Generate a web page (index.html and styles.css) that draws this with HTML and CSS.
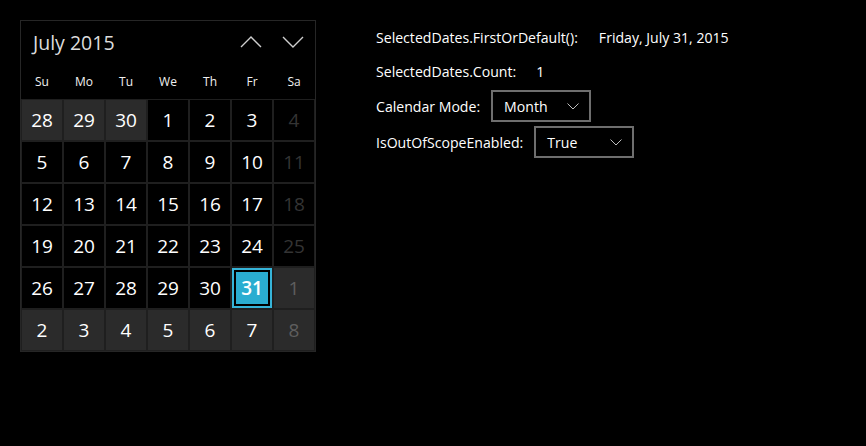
FILE: index.html
```html
<!DOCTYPE html>
<html>
<head>
<meta charset="utf-8">
<link rel="stylesheet" href="styles.css">
</head>
<body>
<div class="page">
  <div class="calendar">
    <div class="cal-head">
      <div class="month-title">July 2015</div>
      <div class="nav">
        <svg class="chev" width="22" height="12" viewBox="0 0 22 12"><polyline points="1,11 11,1 21,11" fill="none" stroke="#cfcfcf" stroke-width="1.4"/></svg>
        <svg class="chev" width="22" height="12" viewBox="0 0 22 12"><polyline points="1,1 11,11 21,1" fill="none" stroke="#cfcfcf" stroke-width="1.4"/></svg>
      </div>
    </div>
    <div class="weekdays">
      <span>Su</span><span>Mo</span><span>Tu</span><span>We</span><span>Th</span><span>Fr</span><span>Sa</span>
    </div>
    <div class="grid">
      <div class="cell out">28</div><div class="cell out">29</div><div class="cell out">30</div><div class="cell">1</div><div class="cell">2</div><div class="cell">3</div><div class="cell dim">4</div>
      <div class="cell">5</div><div class="cell">6</div><div class="cell">7</div><div class="cell">8</div><div class="cell">9</div><div class="cell">10</div><div class="cell dim">11</div>
      <div class="cell">12</div><div class="cell">13</div><div class="cell">14</div><div class="cell">15</div><div class="cell">16</div><div class="cell">17</div><div class="cell dim">18</div>
      <div class="cell">19</div><div class="cell">20</div><div class="cell">21</div><div class="cell">22</div><div class="cell">23</div><div class="cell">24</div><div class="cell dim">25</div>
      <div class="cell">26</div><div class="cell">27</div><div class="cell">28</div><div class="cell">29</div><div class="cell">30</div><div class="cell selected"><span class="sel-inner">31</span></div><div class="cell out dimout">1</div>
      <div class="cell out">2</div><div class="cell out">3</div><div class="cell out">4</div><div class="cell out">5</div><div class="cell out">6</div><div class="cell out">7</div><div class="cell out dimout">8</div>
    </div>
  </div>
  <div class="panel">
    <div class="row r1"><span class="label">SelectedDates.FirstOrDefault():</span><span class="value v1">Friday, July 31, 2015</span></div>
    <div class="row r2"><span class="label">SelectedDates.Count:</span><span class="value v2">1</span></div>
    <div class="row r3"><span class="label">Calendar Mode:</span>
      <div class="combo"><span>Month</span><svg width="12" height="7" viewBox="0 0 12 7"><polyline points="0.5,0.5 6,6 11.5,0.5" fill="none" stroke="#bdbdbd" stroke-width="1"/></svg></div>
    </div>
    <div class="row r4"><span class="label">IsOutOfScopeEnabled:</span>
      <div class="combo"><span>True</span><svg width="12" height="7" viewBox="0 0 12 7"><polyline points="0.5,0.5 6,6 11.5,0.5" fill="none" stroke="#bdbdbd" stroke-width="1"/></svg></div>
    </div>
  </div>
</div>
</body>
</html>
```
FILE: styles.css
```css
html, body {
  margin: 0;
  padding: 0;
  background: #000;
  color: #fff;
  font-family: "Open Sans", "Noto Sans", sans-serif;
}
.page {
  display: flex;
  align-items: flex-start;
  padding: 20px 0 0 20px;
}
.calendar {
  width: 296px;
  box-sizing: border-box;
  border: 1px solid #262626;
}
.cal-head {
  height: 44px;
  display: flex;
  align-items: center;
  justify-content: space-between;
  padding: 0 11px 0 12px;
}
.month-title {
  font-size: 19.5px;
  color: #dcdcdc;
  margin-bottom: 1px;
}
.nav {
  display: flex;
  gap: 20px;
  margin-bottom: 2px;
}
.chev { display: block; }
.weekdays {
  height: 34px;
  display: grid;
  grid-template-columns: repeat(7, 42px);
  align-items: center;
  font-size: 12px;
  color: #f0f0f0;
}
.weekdays span {
  text-align: center;
  padding-bottom: 2px;
}
.grid {
  display: grid;
  grid-template-columns: repeat(7, 42px);
  grid-auto-rows: 42px;
}
.cell {
  box-sizing: border-box;
  border: 1px solid #1f1f1f;
  display: flex;
  align-items: center;
  justify-content: center;
  font-size: 19px;
  color: #fff;
}
.cell.out { background: #2b2b2b; }
.cell.dim { color: #343434; }
.cell.dimout { color: #5e5e5e; }
.cell.selected {
  padding: 0;
}
.sel-inner {
  box-sizing: border-box;
  width: 40px;
  height: 40px;
  border: 2px solid #36b4d8;
  box-shadow: inset 0 0 0 2px #000;
  background: #2aadd1;
  display: flex;
  align-items: center;
  justify-content: center;
  font-weight: 600;
}
.panel {
  margin-left: 60px;
  margin-top: 7px;
  display: flex;
  flex-direction: column;
  font-size: 14.1px;
}
.row {
  display: flex;
  align-items: center;
}
.r1, .r2 { height: 20px; }
.r2 { margin-top: 14px; }
.r3 { margin-top: 9px; height: 32px; }
.r4 { margin-top: 4px; height: 32px; }
.v1 { margin-left: 21px; }
.v2 { margin-left: 20px; }
.combo {
  box-sizing: border-box;
  width: 100px;
  height: 32px;
  margin-left: 11px;
  border: 2px solid #6e6e6e;
  display: flex;
  align-items: center;
  justify-content: space-between;
  padding: 0 10px 0 11px;
}
.combo svg { display: block; }
```
